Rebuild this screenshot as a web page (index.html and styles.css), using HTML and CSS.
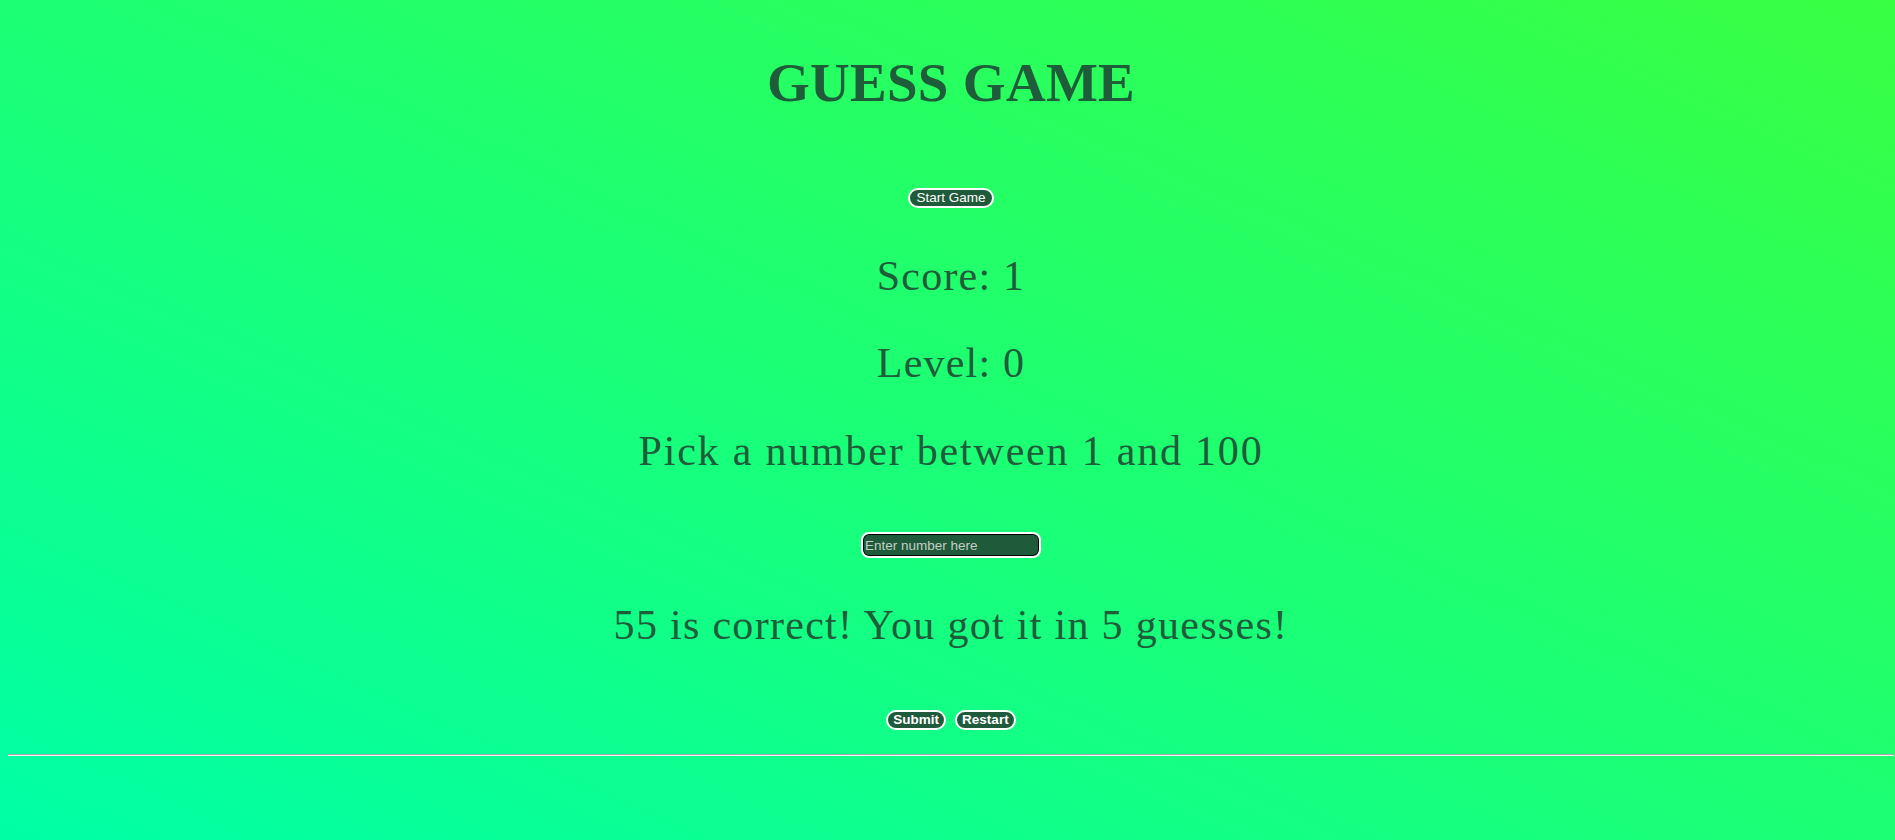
FILE: index.html
```html
<!DOCTYPE html>
<html lang="en">
<head>
<meta charset="utf-8">
<title>Guess Game</title>
<link rel="stylesheet" href="styles.css">
</head>
<body>
<main class="game">
  <h1 class="title">GUESS GAME</h1>
  <div class="row row-start">
    <button class="btn btn-start" type="button">Start Game</button>
  </div>
  <h2 class="line line-score">Score: 1</h2>
  <h2 class="line line-level">Level: 0</h2>
  <h2 class="line line-pick">Pick a number between 1 and 100</h2>
  <div class="row row-input">
    <input class="guess" type="text" placeholder="Enter number here">
  </div>
  <h2 class="line line-result">55 is correct! You got it in 5 guesses!</h2>
  <div class="row row-actions">
    <button class="btn btn-bold" type="button">Submit</button>
    <button class="btn btn-bold" type="button">Restart</button>
  </div>
  <hr class="rule">
</main>
</body>
</html>
```
FILE: styles.css
```css
html {
  height: 100%;
  background: linear-gradient(to top right, #00ffa6, #38ff42);
}
body {
  margin: 0 1px 0 8px;
  min-height: 100%;
  overflow: hidden;
}
.game {
  display: flex;
  flex-direction: column;
  align-items: center;
  color: #1f5c3a;
  font-family: "Liberation Serif", "DejaVu Serif", serif;
}
.title {
  margin: 50px 0 0;
  font-size: 55px;
  line-height: 1.2;
  font-weight: 700;
  letter-spacing: 0.3px;
}
.row {
  display: flex;
  justify-content: center;
  gap: 9px;
}
.row-start {
  margin-top: 72px;
}
.btn {
  background: #1f5a3a;
  color: #ffffff;
  border: 2px solid #ffffff;
  border-radius: 10px;
  font-family: "Liberation Sans", Arial, sans-serif;
  font-size: 13.5px;
  line-height: 14px;
  padding: 1px 5px;
  margin: 0;
}
.btn-start {
  padding: 1px 6px;
}
.btn-bold {
  font-weight: 700;
}
.line {
  margin: 37px 0 0;
  font-size: 42px;
  line-height: 1.2;
  font-weight: 400;
  letter-spacing: 1.3px;
}
.line-score {
  margin-top: 43px;
  letter-spacing: 1.2px;
}
.line-level {
  letter-spacing: 1.2px;
}
.line-pick {
  letter-spacing: 1.8px;
}
.row-input {
  margin-top: 56px;
}
.guess {
  box-sizing: border-box;
  width: 180px;
  height: 26px;
  margin: 0;
  padding: 0 2px;
  background: #1f5a3a;
  color: #e8e8e8;
  border: 2px solid #ffffff;
  border-radius: 8px;
  box-shadow: inset 0 0 0 1px #000000;
  font-family: "Liberation Sans", Arial, sans-serif;
  font-size: 13.5px;
}
.guess::placeholder {
  color: #c3cfc6;
}
.line-result {
  margin-top: 42px;
}
.row-actions {
  margin-top: 59px;
}
.rule {
  align-self: stretch;
  margin: 24px 0 0;
  border: 0;
  border-top: 1px solid #a9a9a9;
  border-bottom: 1px solid #f2f2f2;
  height: 0;
}
```
